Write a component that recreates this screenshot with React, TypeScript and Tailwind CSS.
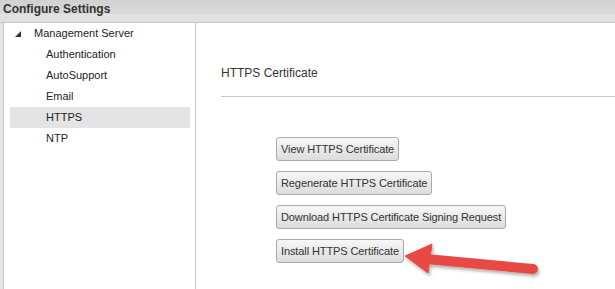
import React from 'react';

const children = ['Authentication', 'AutoSupport', 'Email', 'HTTPS', 'NTP'];
const buttons = [
  'View HTTPS Certificate',
  'Regenerate HTTPS Certificate',
  'Download HTTPS Certificate Signing Request',
  'Install HTTPS Certificate',
];

const App: React.FC = () => {
  return (
    <div className="relative w-[615px] h-[289px] overflow-hidden bg-white font-['Liberation_Sans',Arial,sans-serif] text-[#222]">
      {/* Title bar */}
      <div className="h-[23px] border-b border-[#c6c6c6] bg-[linear-gradient(to_bottom,#d1d1d1_0px,#d9d9d9_14px,#e1e1e1_14px,#e1e1e1_22px)] pl-[3px] pt-[2px] text-[12px] leading-[15px] font-bold text-[#333]">
        Configure Settings
      </div>

      <div className="flex h-[266px]">
        {/* Left strip */}
        <div className="w-[4px] bg-[#e4e4e4] border-r border-[#c8c8c8]" />

        {/* Tree */}
        <div className="w-[192px] border-r border-[#c8c8c8] text-[11px]">
          <div className="flex items-center h-[21px] pl-[11px]">
            <svg width="6" height="6" viewBox="0 0 6 6" className="mr-[13px]">
              <polygon points="6,0 6,6 0,6" fill="#333" />
            </svg>
            <span>Management Server</span>
          </div>
          {children.map((c) => (
            <div
              key={c}
              className={`flex items-center h-[21px] ml-[6px] mr-[5px] pl-[36px] ${
                c === 'HTTPS' ? 'bg-[#e4e4e4]' : ''
              }`}
            >
              {c}
            </div>
          ))}
        </div>

        {/* Main panel */}
        <div className="flex-1 flex flex-col">
          <div className="ml-[25px] mt-[43px] text-[12px] leading-[14px] text-[#333]">HTTPS Certificate</div>
          <div className="ml-[25px] mt-[16px] border-t border-[#c8c8c8]" />
          <div className="mt-[40px] ml-[80px] flex flex-col items-start gap-[10px]">
            {buttons.map((b) => (
              <button
                key={b}
                className="h-[24px] px-[4px] border border-[#ababab] rounded-[3px] bg-linear-to-b from-[#f7f7f7] to-[#dcdcdc] text-[11px] tracking-[-0.1px] text-[#333] leading-none"
              >
                {b}
              </button>
            ))}
          </div>
        </div>
      </div>

      {/* Callout arrow */}
      <svg className="absolute inset-0 pointer-events-none" width="615" height="289" viewBox="0 0 615 289">
        <defs>
          <filter id="sh" x="-10%" y="-30%" width="130%" height="180%">
            <feDropShadow dx="1.5" dy="2.5" stdDeviation="1.5" floodColor="#000" floodOpacity="0.3" />
          </filter>
        </defs>
        <g filter="url(#sh)" fill="#e84a44" stroke="#e84a44">
          <line x1="426" y1="259" x2="533" y2="269" strokeWidth="10" strokeLinecap="round" />
          <polygon points="405,256 432,244 428,273" strokeWidth="1" strokeLinejoin="round" />
        </g>
      </svg>
    </div>
  );
};

export default App;
